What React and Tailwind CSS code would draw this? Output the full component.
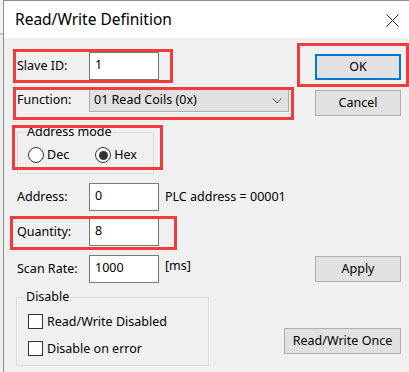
import React from 'react';

const RedBox = ({ className }) => (
    <div className={`absolute border-[3px] border-[#f23c3c] pointer-events-none ${className}`}></div>
);

const TextInput = ({ value }) => (
    <div className="w-[70px] h-[28px] bg-white border border-[#7a7a7a] px-[5px] pt-[4px] leading-[16px]">{value}</div>
);

const Button = ({ children, focused, className = '' }) => (
    <div
        className={`h-[26px] bg-[#e1e1e1] flex items-center justify-center ${focused ? 'border-2 border-[#0078d7]' : 'border border-[#adadad]'} ${className}`}
    >
        {children}
    </div>
);

const Radio = ({ checked, label }) => (
    <div className="flex items-center gap-[3px] leading-[16px]">
        <div className="w-[16px] h-[16px] rounded-full border border-[#333] bg-white flex items-center justify-center">
            {checked && <div className="w-[9px] h-[9px] rounded-full bg-[#333]"></div>}
        </div>
        <span>{label}</span>
    </div>
);

const Checkbox = ({ label }) => (
    <div className="flex items-center gap-[4px] leading-[15px]">
        <div className="w-[15px] h-[15px] border border-[#333] bg-white"></div>
        <span>{label}</span>
    </div>
);

export default function App() {
    return (
        <div className="relative w-[409px] h-[372px] flex bg-[#f0f0f0] text-[12.5px] text-black font-['Noto_Sans',sans-serif] overflow-hidden">
            {/* window behind */}
            <div className="w-[3px] shrink-0 flex flex-col">
                <div className="h-[33px] bg-[#f4f4f4]"></div>
                <div className="h-[2px] bg-[#c4c4c4]"></div>
                <div className="flex-1 bg-[#f0f0f0]"></div>
            </div>

            <div className="flex-1 flex flex-col border-l border-t border-[#8c8c8c]">
                {/* title bar */}
                <div className="h-[37px] shrink-0 bg-white flex items-center justify-between pl-[11px] pr-[10px]">
                    <span className="text-[15.5px] mt-[1px]">Read/Write Definition</span>
                    <svg width="13" height="13" viewBox="0 0 13 13" className="mt-[1px]">
                        <path d="M0.5 0.5 L12.5 12.5 M12.5 0.5 L0.5 12.5" stroke="#222" strokeWidth="1" />
                    </svg>
                </div>

                {/* body */}
                <div className="flex-1 flex flex-col pl-[13px] pr-[8px]">
                    <div className="mt-[14px] flex items-start justify-between">
                        <div className="flex items-center">
                            <span className="w-[72px]">Slave ID:</span>
                            <TextInput value="1" />
                        </div>
                        <Button focused className="mt-[2px] w-[86px]">OK</Button>
                    </div>

                    <div className="mt-[9px] flex items-start justify-between">
                        <div className="flex items-center">
                            <span className="w-[72px]">Function:</span>
                            <div className="w-[200px] h-[23px] bg-[#e1e1e1] border border-[#adadad] flex items-center justify-between pl-[4px] pr-[6px]">
                                <span>01 Read Coils (0x)</span>
                                <svg width="10" height="6" viewBox="0 0 10 6">
                                    <path d="M0.5 0.5 L5 5 L9.5 0.5" fill="none" stroke="#555" strokeWidth="1" />
                                </svg>
                            </div>
                        </div>
                        <Button className="mt-[1px] w-[86px]">Cancel</Button>
                    </div>

                    <fieldset className="mt-[8px] w-[137px] h-[50px] border border-[#dcdcdc] px-[10px]">
                        <legend className="ml-[-2px] px-[1px] leading-[16px]">Address mode</legend>
                        <div className="mt-[7px] flex gap-[26px]">
                            <Radio label="Dec" />
                            <Radio checked label="Hex" />
                        </div>
                    </fieldset>

                    <div className="mt-[9px] flex items-center">
                        <span className="w-[72px]">Address:</span>
                        <TextInput value="0" />
                        <span className="ml-[6px]">PLC address = 00001</span>
                    </div>
                    <div className="mt-[7px] flex items-center">
                        <span className="w-[72px]">Quantity:</span>
                        <TextInput value="8" />
                    </div>
                    <div className="mt-[9px] flex items-start justify-between">
                        <div className="flex items-center">
                            <span className="w-[72px]">Scan Rate:</span>
                            <TextInput value="1000" />
                            <span className="ml-[6px] mb-[5px]">[ms]</span>
                        </div>
                        <Button className="mt-[1px] w-[86px]">Apply</Button>
                    </div>

                    <div className="mt-[6px] flex items-start justify-between">
                        <fieldset className="ml-[-1px] w-[193px] h-[77px] border border-[#dcdcdc] px-[11px]">
                            <legend className="ml-[-3px] px-[1px] leading-[16px]">Disable</legend>
                            <div className="mt-[9px] flex flex-col gap-[12px]">
                                <Checkbox label="Read/Write Disabled" />
                                <Checkbox label="Disable on error" />
                            </div>
                        </fieldset>
                        <Button className="mt-[39px] w-[117px]">Read/Write Once</Button>
                    </div>
                </div>
            </div>

            {/* annotation boxes */}
            <RedBox className="left-[13px] top-[49px] w-[160px] h-[34px]" />
            <RedBox className="left-[297px] top-[43px] w-[112px] h-[44px]" />
            <RedBox className="left-[13px] top-[87px] w-[281px] h-[33px]" />
            <RedBox className="left-[12px] top-[125px] w-[151px] h-[45px]" />
            <RedBox className="left-[10px] top-[216px] w-[167px] h-[34px]" />
        </div>
    );
}
